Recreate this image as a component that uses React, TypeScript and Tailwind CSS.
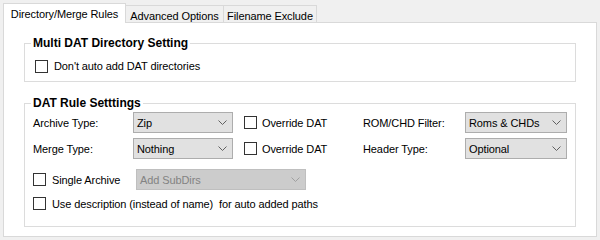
import React from "react";

function Chevron({ color = "#606060" }: { color?: string }) {
  return (
    <svg width="9" height="5" viewBox="0 0 9 5" className="shrink-0">
      <polyline points="0.5,0.5 4.5,4.5 8.5,0.5" fill="none" stroke={color} strokeWidth="1" />
    </svg>
  );
}

function Combo({ value, width, disabled = false }: { value: string; width: string; disabled?: boolean }) {
  return (
    <div
      className={
        disabled
          ? `${width} h-[21px] border border-[#bfbfbf] bg-[#cccccc] text-[#838383] flex items-center justify-between pl-[3px] pr-[5px] shrink-0`
          : `${width} h-[21px] border border-[#adadad] bg-[#e1e1e1] text-black flex items-center justify-between pl-[3px] pr-[5px] shrink-0`
      }
    >
      <span className="whitespace-nowrap">{value}</span>
      <Chevron color={disabled ? "#a0a0a0" : "#606060"} />
    </div>
  );
}

function Check() {
  return <div className="w-[13px] h-[13px] border border-[#333333] bg-white shrink-0" />;
}

export default function App() {
  return (
    <div className="w-[600px] h-[240px] bg-[#f0f0f0] pt-[3px] pl-[3px] font-['Liberation_Sans',Arial,sans-serif] text-[11px] tracking-[-0.1px] leading-[14px] text-black">
      <div className="flex items-end h-[19px] relative z-10 whitespace-nowrap">
        <div className="w-[123px] h-[20px] -mb-px bg-white border border-b-0 border-[#d9d9d9] flex items-start justify-center pt-[3px]">
          Directory/Merge Rules
        </div>
        <div className="w-[98px] h-[17px] bg-[#f0f0f0] border-t border-r border-[#d9d9d9] flex items-start justify-center pt-[3px]">
          Advanced Options
        </div>
        <div className="w-[93px] h-[17px] bg-[#f0f0f0] border-t border-r border-[#d9d9d9] flex items-start justify-center pt-[3px]">
          Filename Exclude
        </div>
      </div>
      <div className="w-[594px] h-[215px] bg-white border border-[#d9d9d9] pl-[20px] pt-[13px] whitespace-nowrap">
        <fieldset className="w-[552px] border border-[#dcdcdc] m-0 p-0">
          <legend className="ml-[6px] px-[2px] font-bold text-[12px] tracking-normal leading-[14px]">Multi DAT Directory Setting</legend>
          <div className="flex items-center pl-[10px] pt-[9px] pb-[8px]">
            <Check />
            <span className="ml-[6px]">Don't auto add DAT directories</span>
          </div>
        </fieldset>
        <fieldset className="w-[552px] mt-[14px] border border-[#dcdcdc] m-0 p-0">
          <legend className="ml-[6px] px-[2px] font-bold text-[12px] tracking-normal leading-[14px]">DAT Rule Setttings</legend>
          <div className="flex flex-col pl-[8px] pt-[2px] pb-[16px]">
            <div className="flex items-center h-[21px]">
              <span className="w-[100px] shrink-0">Archive Type:</span>
              <Combo value="Zip" width="w-[100px]" />
              <div className="w-[130px] flex items-center pl-[11px] shrink-0">
                <Check />
                <span className="ml-[5px]">Override DAT</span>
              </div>
              <span className="w-[102px] shrink-0">ROM/CHD Filter:</span>
              <Combo value="Roms & CHDs" width="w-[102px]" />
            </div>
            <div className="flex items-center h-[21px] mt-[5px]">
              <span className="w-[100px] shrink-0">Merge Type:</span>
              <Combo value="Nothing" width="w-[100px]" />
              <div className="w-[130px] flex items-center pl-[11px] shrink-0">
                <Check />
                <span className="ml-[5px]">Override DAT</span>
              </div>
              <span className="w-[102px] shrink-0">Header Type:</span>
              <Combo value="Optional" width="w-[102px]" />
            </div>
            <div className="flex items-center h-[21px] mt-[10px]">
              <div className="w-[103px] flex items-center shrink-0">
                <Check />
                <span className="ml-[6px]">Single Archive</span>
              </div>
              <Combo value="Add SubDirs" width="w-[170px]" disabled />
            </div>
            <div className="flex items-center h-[13px] mt-[7px]">
              <Check />
              <span className="ml-[6px]">Use description (instead of name)&nbsp; for auto added paths</span>
            </div>
          </div>
        </fieldset>
      </div>
    </div>
  );
}
